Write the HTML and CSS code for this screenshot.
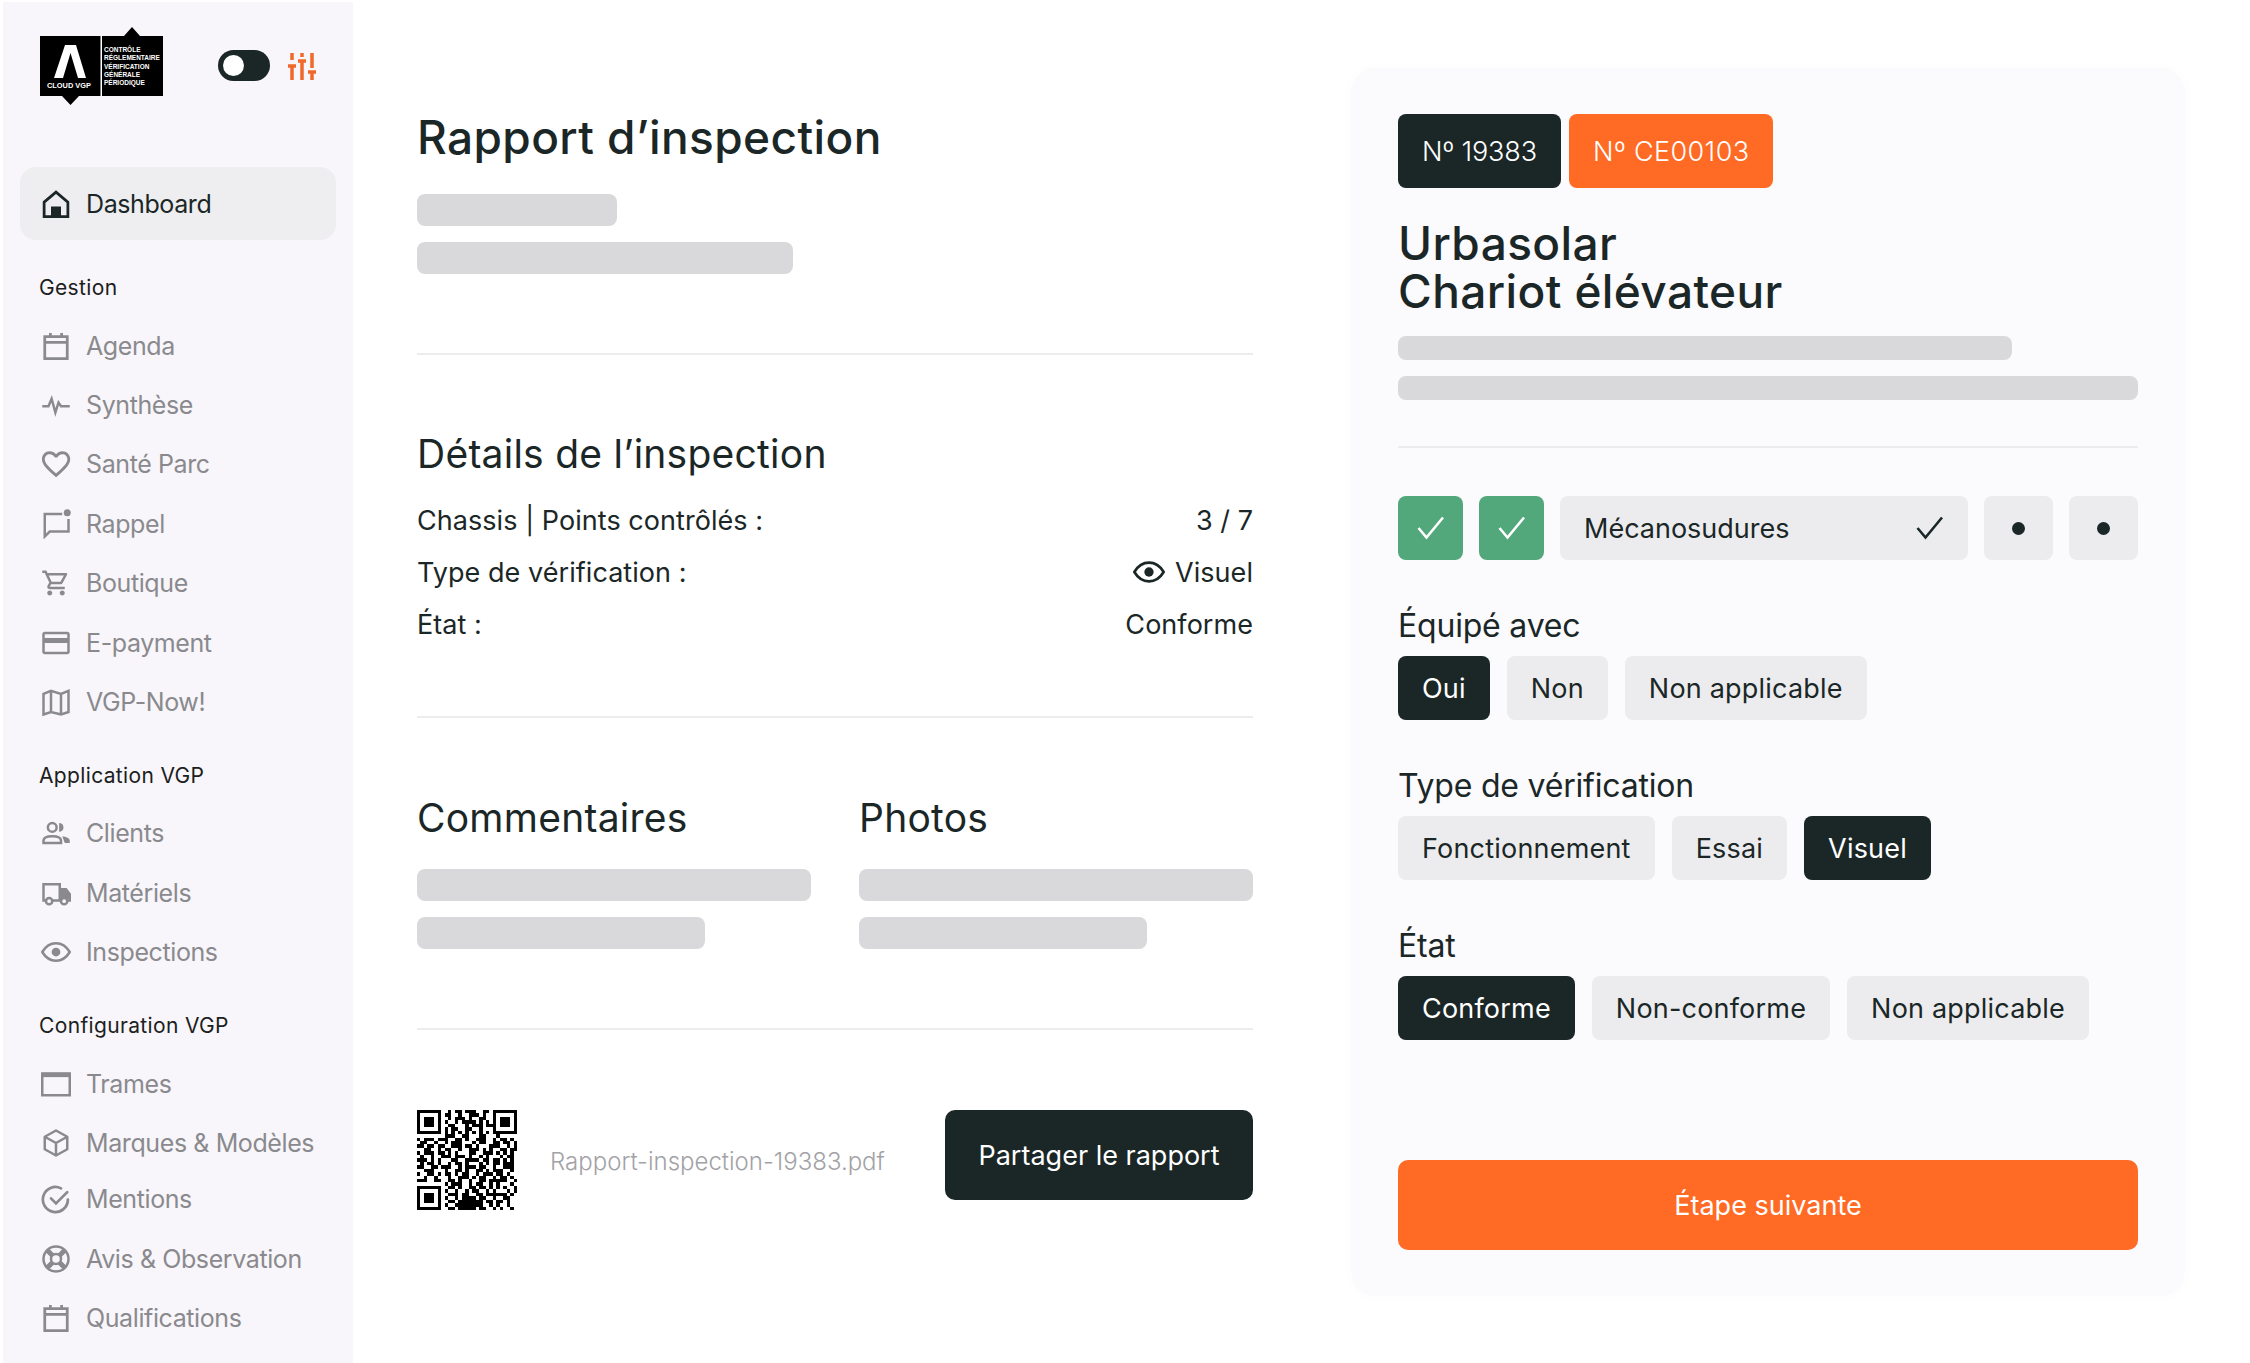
FILE: index.html
```html
<!DOCTYPE html>
<html lang="fr">
<head>
<meta charset="utf-8">
<title>Rapport d’inspection</title>
<link rel="stylesheet" href="styles.css">
</head>
<body>
<div class="app">
  <aside class="sidebar">
    <div class="brand">
      <svg class="logo" width="125" height="80" viewBox="0 0 125 80">
        <path fill="#000" d="M1 9H85L93 0L101 9H124V69H40L31.500 78L23 69H1Z"/>
        <rect x="61.500" y="9" width="1.500" height="60" fill="#fff"/>
        <path fill="#fff" d="M26 18H37L47 51H39L31.500 26L24 51H15Z"/>
        <text class="logo-a" x="8" y="61">CLOUD VGP</text>
        <text class="logo-b" x="65" y="25">CONTRÔLE</text>
        <text class="logo-b" x="65" y="33.300">RÉGLEMENTAIRE</text>
        <text class="logo-b" x="65" y="41.600">VÉRIFICATION</text>
        <text class="logo-b" x="65" y="49.900">GÉNÉRALE</text>
        <text class="logo-b" x="65" y="58.200">PÉRIODIQUE</text>
      </svg>
      <span class="toggle"><span class="knob"></span></span>
      <svg class="sliders" width="30" height="30" viewBox="0 0 30 30" fill="none" stroke="#f0692c" stroke-width="3.500">
        <path d="M5 2V9M1 15H9M5 15V29M15 2V6M11 10H19M15 10V29M25 2V17M21 21H29M25 21V29"/>
      </svg>
    </div>

    <nav class="nav">
      <a class="item active">
        <svg class="ico" viewBox="0 0 24 24" fill="none" stroke="currentColor" stroke-width="2.200"><path d="M2.500 10.500L12 2.500L21.500 10.500V22H2.500Z"/><path fill="currentColor" stroke="none" d="M8 14H16V22H8Z"/></svg>
        <span>Dashboard</span>
      </a>

      <h3 class="label first">Gestion</h3>
      <a class="item"><svg class="ico"><use href="#i-cal"/></svg><span>Agenda</span></a>
      <a class="item"><svg class="ico" viewBox="0 0 24 24" fill="none" stroke="currentColor" stroke-width="2"><path d="M1 13H6L8.500 7L11.500 18L14 10L16 13H23"/></svg><span>Synthèse</span></a>
      <a class="item"><svg class="ico" viewBox="0 0 24 24" fill="currentColor"><path d="M16.500 3c-1.740 0-3.410.810-4.500 2.090C10.910 3.810 9.240 3 7.500 3 4.420 3 2 5.420 2 8.500c0 3.780 3.400 6.860 8.550 11.540L12 21.350l1.450-1.320C18.600 15.360 22 12.280 22 8.500 22 5.420 19.580 3 16.500 3zm-4.400 15.550l-.1.100-.1-.100C7.140 14.240 4 11.390 4 8.500 4 6.500 5.500 5 7.500 5c1.540 0 3.040.990 3.570 2.360h1.870C13.460 5.990 14.960 5 16.500 5c2 0 3.500 1.500 3.500 3.500 0 2.890-3.140 5.740-7.900 10.050z" transform="translate(-1.500 -1.500) scale(1.130)"/></svg><span>Santé Parc</span></a>
      <a class="item"><svg class="ico" viewBox="0 0 24 24" fill="none" stroke="currentColor" stroke-width="2"><path d="M17 4H3V22L7 18H22V8"/><circle cx="21" cy="3" r="2.800" fill="currentColor" stroke="none"/></svg><span>Rappel</span></a>
      <a class="item"><svg class="ico" viewBox="0 0 24 24" fill="currentColor"><path d="M15.550 13c.750 0 1.410-.410 1.750-1.030l3.580-6.490c.370-.660-.110-1.480-.870-1.480H5.210l-.940-2H1v2h2l3.600 7.590-1.350 2.440C4.520 15.370 5.480 17 7 17h12v-2H7l1.100-2h7.450zM6.160 6h12.150l-2.760 5H8.530L6.160 6zM7 18c-1.100 0-1.990.900-1.990 2S5.900 22 7 22s2-.900 2-2-.900-2-2-2zm10 0c-1.100 0-1.990.900-1.990 2s.890 2 1.990 2 2-.900 2-2-.900-2-2-2z"/></svg><span>Boutique</span></a>
      <a class="item"><svg class="ico" viewBox="0 0 24 24" fill="currentColor"><path d="M21 3H3C1.900 3 1 3.900 1 5V19C1 20.100 1.900 21 3 21H21C22.100 21 23 20.100 23 19V5C23 3.900 22.100 3 21 3ZM21 19H3V12H21ZM21 8H3V5H21Z"/></svg><span>E-payment</span></a>
      <a class="item"><svg class="ico" viewBox="0 0 24 24" fill="none" stroke="currentColor" stroke-width="2"><path d="M2 5.500L8 3L16 5.500L22 3V20L16 22L8 20L2 22ZM8 3V20M16 5.500V22"/></svg><span>VGP-Now!</span></a>

      <h3 class="label">Application VGP</h3>
      <a class="item"><svg class="ico" viewBox="0 0 24 24" fill="none" stroke="currentColor" stroke-width="2"><circle cx="9" cy="7.500" r="3.500"/><path d="M14.500 4A3.500 3.500 0 0 1 14.500 11" fill="currentColor" stroke="none"/><path d="M2 20V18C2 15.500 5 14.500 9 14.500S16 15.500 16 18V20Z"/><path d="M17 14.500C20 15 23 16 23 18V20H19" fill="currentColor" stroke="none"/></svg><span>Clients</span></a>
      <a class="item"><svg class="ico" viewBox="0 0 24 24" fill="none" stroke="currentColor" stroke-width="2"><path d="M4 18H2V5H15V18H9M15 9H20L23 13V18H21"/><path d="M16 9H20L23 13V17H16Z" fill="currentColor" stroke="none"/><circle cx="6.500" cy="18.500" r="2.500"/><circle cx="18.500" cy="18.500" r="2.500" fill="#f8f6fa"/></svg><span>Matériels</span></a>
      <a class="item"><svg class="ico" viewBox="0 0 24 24"><use href="#i-eye"/></svg><span>Inspections</span></a>

      <h3 class="label">Configuration VGP</h3>
      <a class="item"><svg class="ico" viewBox="0 0 24 24" fill="none" stroke="currentColor" stroke-width="2"><path d="M1 3.500H23V21H1Z"/><path d="M1 3H23V6.500H1Z" fill="currentColor" stroke="none"/></svg><span>Trames</span></a>
      <a class="item tight"><svg class="ico" viewBox="0 0 24 24" fill="none" stroke="currentColor" stroke-width="2" stroke-linejoin="round"><path d="M12 2L21 7V17L12 22L3 17V7ZM3 7L12 12L21 7M12 12V22"/></svg><span>Marques &amp; Modèles</span></a>
      <a class="item"><svg class="ico" viewBox="0 0 24 24" fill="none" stroke="currentColor" stroke-width="2.200" stroke-linecap="round"><path d="M21.500 12.500A10 10 0 1 1 16 3.500"/><path d="M8 11.500L12 15.500L21 6.500"/></svg><span>Mentions</span></a>
      <a class="item"><svg class="ico" viewBox="0 0 24 24" fill="none" stroke="currentColor" stroke-width="2"><circle cx="12" cy="12" r="10"/><circle cx="12" cy="12" r="4"/><path stroke-width="4" d="M5 5L9 9M19 5L15 9M5 19L9 15M19 19L15 15"/></svg><span>Avis &amp; Observation</span></a>
      <a class="item"><svg class="ico"><use href="#i-cal"/></svg><span>Qualifications</span></a>
    </nav>
  </aside>

  <main class="report">
    <section class="block head">
      <h1 class="title">Rapport d’inspection</h1>
      <div class="skel w200"></div>
      <div class="skel w376"></div>
    </section>

    <section class="block details">
      <h2 class="subtitle">Détails de l’inspection</h2>
      <div class="kv"><span>Chassis | Points contrôlés :</span><span>3 / 7</span></div>
      <div class="kv"><span>Type de vérification :</span><span class="kv-icon"><svg class="eye" viewBox="0 0 24 24"><use href="#i-eye"/></svg>Visuel</span></div>
      <div class="kv"><span>État :</span><span>Conforme</span></div>
    </section>

    <section class="block columns">
      <div>
        <h2 class="subtitle col-title">Commentaires</h2>
        <div class="skel"></div>
        <div class="skel w73"></div>
      </div>
      <div>
        <h2 class="subtitle col-title">Photos</h2>
        <div class="skel"></div>
        <div class="skel w73"></div>
      </div>
    </section>

    <section class="share">
      <svg class="qr" width="100" height="100" viewBox="0 0 29 29" fill="none" stroke="#000" stroke-width="1" shape-rendering="crispEdges">
        <path d="M0 .5h7m2 0h1m1 0h2m1 0h3m2 0h2m1 0h7
M0 1.500h1m5 0h1m1 0h2m2 0h1m2 0h3m1 0h1m2 0h1m5 0h1
M0 2.500h1m1 0h3m1 0h1m2 0h1m1 0h3m1 0h1m2 0h2m2 0h1m1 0h3m1 0h1
M0 3.500h1m1 0h3m1 0h1m1 0h1m2 0h1m1 0h4m1 0h1m1 0h1m1 0h1m1 0h3m1 0h1
M0 4.500h1m1 0h3m1 0h1m2 0h2m3 0h1m1 0h3m1 0h3m1 0h3m1 0h1
M0 5.500h1m5 0h1m1 0h1m1 0h2m2 0h2m2 0h1m3 0h1m5 0h1
M0 6.500h7m1 0h1m1 0h1m1 0h1m1 0h1m1 0h1m1 0h1m1 0h1m1 0h7
M8 7.500h3m2 0h2m3 0h2m3 0h1
M0 8.500h1m1 0h3m1 0h3m2 0h2m1 0h1m2 0h3m2 0h1m1 0h2m1 0h1m1 0h1
M1 9.500h2m2 0h1m2 0h1m1 0h3m3 0h1m1 0h2m2 0h2m1 0h2m1 0h1
M0 10.500h2m1 0h2m1 0h2m2 0h3m1 0h2m1 0h1m3 0h3m2 0h1m1 0h1
M2 11.500h2m2 0h1m1 0h2m2 0h1m2 0h3m1 0h1m1 0h1m2 0h2m1 0h2
M0 12.500h1m1 0h3m1 0h2m1 0h1m1 0h1m3 0h2m2 0h3m1 0h1m1 0h1m1 0h1
M1 13.500h1m2 0h1m2 0h3m1 0h3m1 0h1m2 0h1m1 0h1m3 0h1m1 0h2
M0 14.500h3m1 0h1m1 0h1m3 0h2m2 0h4m1 0h2m1 0h2m1 0h1m1 0h1
M1 15.500h1m1 0h2m1 0h1m2 0h1m1 0h2m1 0h1m3 0h1m1 0h1m1 0h2m1 0h3
M0 16.500h2m2 0h2m1 0h3m2 0h1m1 0h3m1 0h2m2 0h1m2 0h3
M2 17.500h3m3 0h1m2 0h2m1 0h1m2 0h2m1 0h1m1 0h3m2 0h1
M0 18.500h1m2 0h2m1 0h1m1 0h2m1 0h1m1 0h2m2 0h1m1 0h3m1 0h2m1 0h1
M2 19.500h1m2 0h1m3 0h1m2 0h3m1 0h1m1 0h2m2 0h1m1 0h2m1 0h1
M0 20.500h3m2 0h2m2 0h2m1 0h1m2 0h1m2 0h2m1 0h5m2 0h1
M8 21.500h1m1 0h3m2 0h1m1 0h2m2 0h1m1 0h1m3 0h1m1 0h1
M0 22.500h7m2 0h2m1 0h1m2 0h2m1 0h2m1 0h1m1 0h1m1 0h1m2 0h1
M0 23.500h1m5 0h1m1 0h1m2 0h1m2 0h1m1 0h2m2 0h1m1 0h1m3 0h1m1 0h1
M0 24.500h1m1 0h3m1 0h1m2 0h3m1 0h2m2 0h2m1 0h6m1 0h1
M0 25.500h1m1 0h3m1 0h1m1 0h1m2 0h1m1 0h4m1 0h2m2 0h1m2 0h2
M0 26.500h1m1 0h3m1 0h1m2 0h2m1 0h7m1 0h2m1 0h2m1 0h1
M0 27.500h1m5 0h1m1 0h1m2 0h8m2 0h1m1 0h1m2 0h1
M0 28.500h7m2 0h2m1 0h5m1 0h2m2 0h1m1 0h1m2 0h1m1 0h1"/>
      </svg>
      <span class="file">Rapport-inspection-19383.pdf</span>
      <button class="btn-dark">Partager le rapport</button>
    </section>
  </main>

  <section class="card">
    <div class="chips">
      <span class="chip dark">Nº 19383</span>
      <span class="chip orange">Nº CE00103</span>
    </div>
    <h1 class="title card-title">Urbasolar<br>Chariot élévateur</h1>
    <div class="skel thin w83"></div>
    <div class="skel thin"></div>
    <hr class="rule">

    <div class="steps">
      <span class="step done"><svg class="chk" viewBox="0 0 28 28"><use href="#i-chk"/></svg></span>
      <span class="step done"><svg class="chk" viewBox="0 0 28 28"><use href="#i-chk"/></svg></span>
      <span class="step current">Mécanosudures<svg class="chk" viewBox="0 0 28 28"><use href="#i-chk"/></svg></span>
      <span class="step todo"><i class="dot"></i></span>
      <span class="step todo"><i class="dot"></i></span>
    </div>

    <div class="field">
      <h3 class="field-label">Équipé avec</h3>
      <div class="pills"><span class="pill on">Oui</span><span class="pill">Non</span><span class="pill">Non applicable</span></div>
    </div>
    <div class="field">
      <h3 class="field-label">Type de vérification</h3>
      <div class="pills"><span class="pill">Fonctionnement</span><span class="pill">Essai</span><span class="pill on">Visuel</span></div>
    </div>
    <div class="field">
      <h3 class="field-label">État</h3>
      <div class="pills"><span class="pill on">Conforme</span><span class="pill">Non-conforme</span><span class="pill">Non applicable</span></div>
    </div>

    <button class="btn-next">Étape suivante</button>
  </section>
</div>

<svg class="defs" width="0" height="0">
  <defs>
    <symbol id="i-cal" viewBox="0 0 24 24" fill="none" stroke="currentColor" stroke-width="2.200"><path d="M3 4.500H21V22H3ZM3 9H21"/><path d="M7.500 1.500V5M16.500 1.500V5"/></symbol>
    <symbol id="i-eye" viewBox="0 0 24 24" fill="none" stroke="currentColor" stroke-width="2"><path d="M1 12C4 7 8 5 12 5S20 7 23 12C20 17 16 19 12 19S4 17 1 12Z"/><circle cx="12" cy="12" r="3.500" fill="currentColor" stroke="none"/></symbol>
    <symbol id="i-chk" viewBox="0 0 28 28" fill="none" stroke="currentColor" stroke-width="2.600"><path d="M1.500 14L9.500 23.500L26 3.500"/></symbol>
  </defs>
</svg>
</body>
</html>
```

FILE: styles.css
```css
* { box-sizing: border-box; }
html, body { margin: 0; height: 100%; }
body {
  background: #fff;
  color: #1b2727;
  font-family: Inter, "Noto Sans", "Liberation Sans", sans-serif;
  overflow: hidden;
}
h1, h2, h3 { margin: 0; font-weight: 400; }
.defs { position: absolute; }

.app { display: flex; align-items: flex-start; height: 1363px; }

/* Sidebar */
.sidebar {
  flex: none;
  width: 350px;
  height: 1361px;
  margin: 2px 0 0 3px;
  background: #f8f6fa;
}
.brand {
  display: flex;
  align-items: flex-start;
  height: 165px;
  padding: 25px 0 0 36px;
}
.logo { flex: none; margin-right: 54px; }
.logo-a { fill: #fff; font: 700 7.400px "Liberation Sans", sans-serif; }
.logo-b { fill: #fff; font: 700 6.500px "Liberation Sans", sans-serif; }
.toggle {
  flex: none;
  display: flex;
  align-items: center;
  width: 52px;
  height: 31px;
  margin-top: 23px;
  padding-left: 5px;
  border-radius: 16px;
  background: #1b2727;
}
.knob { width: 21px; height: 21px; border-radius: 50%; background: #fff; }
.sliders { flex: none; margin: 24px 0 0 17px; }

.nav { padding: 0 17px; }
.item {
  display: flex;
  align-items: center;
  gap: 15px;
  height: 59.4px;
  padding-left: 21px;
  color: #8a8a8e;
  font-size: 25px;
  letter-spacing: -.4px;
}
.item.tight { margin-bottom: -3px; }
.item.active {
  height: 73px;
  color: #1b2727;
  background: #eeedef;
  border-radius: 16px;
}
.ico { flex: none; width: 30px; height: 30px; }
.label {
  height: 40px;
  margin: 23px 0 9px;
  padding-left: 19px;
  font-size: 21px;
  line-height: 41px;
  letter-spacing: .35px;
  color: #1b2020;
}
.label.first { margin-top: 27px; }

/* Main report */
.report { flex: none; width: 836px; margin-left: 64px; padding-top: 109px; }
.title { font-size: 46px; line-height: 56px; font-weight: 500; letter-spacing: .4px; }
.subtitle { font-size: 39px; line-height: 44px; letter-spacing: .25px; }
.block { border-bottom: 2px solid #ececee; }
.skel { height: 32px; border-radius: 8px; background: #d9d8db; }
.skel + .skel { margin-top: 16px; }
.w200 { width: 200px; }
.w376 { width: 376px; }
.w73 { width: 73%; }
.w83 { width: 83%; }
.head { padding-bottom: 79px; }
.head .title { margin-bottom: 29px; }
.details { padding: 77px 0 66px; }
.details .subtitle { margin-bottom: 18px; }
.kv { display: flex; justify-content: space-between; align-items: center; height: 52px; font-size: 27px; letter-spacing: .05px; }
.kv-icon { display: flex; align-items: center; gap: 10px; }
.eye { width: 32px; height: 32px; }
.columns { display: grid; grid-template-columns: 394px 394px; column-gap: 48px; padding: 78px 0 79px; }
.col-title { margin-bottom: 29px; }
.share { display: flex; align-items: flex-start; padding-top: 80px; }
.qr { flex: none; }
.file { margin: 37px auto 0 33px; font-size: 24px; font-weight: 300; color: #a2a2a6; }
.btn-dark {
  flex: none;
  width: 308px;
  height: 90px;
  border: 0;
  border-radius: 10px;
  background: #1b2727;
  color: #fff;
  font: 400 27px Inter, sans-serif;
}

/* Card */
.card {
  flex: none;
  display: flex;
  flex-direction: column;
  width: 834px;
  height: 1228px;
  margin: 68px 0 0 98px;
  padding: 46px 47px;
  border-radius: 24px;
  background: #fbfafd;
  box-shadow: 0 0 16px rgba(30, 20, 60, .015);
}
.chips { display: flex; gap: 8px; }
.chip { display: flex; align-items: center; height: 74px; padding: 0 24px; border-radius: 8px; color: #fff; font-size: 27px; font-weight: 300; }
.chip.dark { background: #1b2727; letter-spacing: -.1px; }
.chip.orange { background: #ff6a24; letter-spacing: .4px; }
.card-title { margin-top: 31px; line-height: 48px; }
.thin { height: 24px; margin-top: 21px; }
.rule { width: 100%; margin: 46px 0 48px; border: 0; border-top: 2px solid #ececee; }

.steps { display: flex; gap: 16px; }
.step { display: flex; align-items: center; justify-content: center; height: 64px; border-radius: 8px; }
.step.done { width: 65px; background: #52a87a; color: #fff; }
.step.current { width: 408px; justify-content: space-between; padding: 0 24px; background: #ececee; font-size: 27px; color: #1b2727; }
.step.todo { flex: 1; background: #ececee; }
.chk { width: 28px; height: 28px; }
.dot { width: 13px; height: 13px; border-radius: 50%; background: #1b2727; }

.field { margin-top: 44px; }
.field-label { height: 40px; margin-bottom: 12px; font-size: 32px; line-height: 44px; letter-spacing: -.2px; }
.pills { display: flex; gap: 17px; }
.pill { display: flex; align-items: center; height: 64px; padding: 0 24px; border-radius: 8px; background: #ececee; font-size: 27px; letter-spacing: .2px; }
.pill.on { background: #1b2727; color: #fff; }

.btn-next {
  width: 100%;
  height: 90px;
  margin-top: auto;
  border: 0;
  border-radius: 10px;
  background: #ff6a24;
  color: #fff;
  font: 400 27px Inter, sans-serif;
}
```
